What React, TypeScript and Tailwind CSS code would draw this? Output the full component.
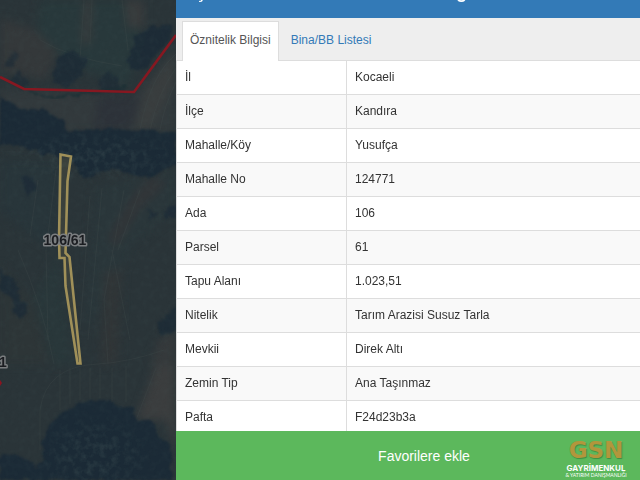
const rows: [string, string][] = [
  ["İl", "Kocaeli"],
  ["İlçe", "Kandıra"],
  ["Mahalle/Köy", "Yusufça"],
  ["Mahalle No", "124771"],
  ["Ada", "106"],
  ["Parsel", "61"],
  ["Tapu Alanı", "1.023,51"],
  ["Nitelik", "Tarım Arazisi Susuz Tarla"],
  ["Mevkii", "Direk Altı"],
  ["Zemin Tip", "Ana Taşınmaz"],
  ["Pafta", "F24d23b3a"],
];

const belt =
  "M0 98L22 110L42 108L62 120L70 132L104 128L176 132V164L148 178L110 170L84 178L70 158L42 154L28 148L0 144Z";
const grove =
  "M42 440L52 420L72 408L92 400L108 400L120 408L134 406L136 422L152 418L158 436L170 444L172 480H0V454L20 456L36 466L44 460Z";

function ParcelMap() {
  return (
    <svg
      className="block h-full w-full"
      viewBox="0 0 176 480"
      preserveAspectRatio="xMidYMid slice"
      role="img"
      aria-label="Parsel haritası"
    >
      <defs>
        <filter id="soft" x="-20%" y="-20%" width="140%" height="140%" colorInterpolationFilters="sRGB">
          <feGaussianBlur stdDeviation="4" />
        </filter>
        <filter id="trees" x="-10%" y="-10%" width="120%" height="120%" colorInterpolationFilters="sRGB">
          <feTurbulence type="fractalNoise" baseFrequency="0.12" numOctaves="3" seed="4" result="n" />
          <feDisplacementMap in="SourceGraphic" in2="n" scale="8" xChannelSelector="R" yChannelSelector="G" />
          <feGaussianBlur stdDeviation="1.2" />
        </filter>
        <filter id="grain" x="0" y="0" width="100%" height="100%" colorInterpolationFilters="sRGB">
          <feTurbulence type="fractalNoise" baseFrequency="0.16" numOctaves="3" seed="9" />
          <feColorMatrix values="0 0 0 0 0.3  0 0 0 0 0.38  0 0 0 0 0.38  1.6 0 0 0 -0.6" />
        </filter>
        <radialGradient id="clearing">
          <stop offset="0.3" stopColor="#fff" />
          <stop offset="1" stopColor="#000" />
        </radialGradient>
        <mask id="canopy">
          <ellipse cx="94" cy="156" rx="100" ry="26" fill="url(#clearing)" />
          <ellipse cx="94" cy="456" rx="62" ry="42" fill="url(#clearing)" />
        </mask>
      </defs>
      <rect width="176" height="480" fill="#2a3438" />
      <g filter="url(#soft)">
        <path d="M40 0H142V40L128 88L60 60L36 36Z" fill="#28383b" />
        <path d="M0 18L36 30L58 52L46 80L0 72Z" fill="#34383a" />
        <path d="M84 0H92L90 44H82ZM124 0H144V28H128Z" fill="#383b3c" />
        <path d="M0 88L134 96L176 48V132H0Z" fill="#32393c" />
        <path d="M98 97H140L130 130H94Z" fill="#2d3239" />
        <path d="M176 50L146 88L134 130H150L176 80Z" fill="#393d3e" />
        <path d="M0 160H60L54 250L24 230L0 210Z" fill="#28353a" />
        <path d="M94 188L150 176L176 170V212L134 244L108 300L84 330Z" fill="#2a363a" />
        <path d="M152 174L166 184L138 212L116 248L108 238L132 196Z" fill="#313538" />
        <path d="M104 272L122 268L118 362L100 366Z" fill="#303537" />
        <path d="M0 264L32 300L50 364H0Z" fill="#2d3537" />
        <path d="M156 364H176V454L166 420L136 420Z" fill="#3b3d3e" />
        <path d="M34 300L58 250L74 364L52 366Z" fill="#29373a" />
        <path d="M158 340L176 330V366H150Z" fill="#35393b" />
      </g>
      <g stroke="#414b4b" strokeWidth="1" fill="none" opacity="0.3">
        <path d="M84 0L80 60M92 0L90 44M122 0L128 50M40 40Q70 58 122 66" />
        <path d="M176 54Q150 76 140 130M176 68Q158 92 150 130M176 82Q164 106 160 130" />
        <path d="M56 170L46 250L48 340M38 180L30 236M90 196L80 330M102 188L88 340" />
        <path d="M124 190L104 300L108 364M140 190L118 250M18 250Q44 310 54 364" />
        <path d="M40 450V410Q46 366 98 364Q130 362 164 350" />
        <path d="M60 370V410M70 368V404M80 368V400M90 368V400M100 368V398M112 368V402M126 366V402" />
        <path d="M156 368L136 420M130 340L112 250" />
      </g>
      <g fill="#1b2a36" filter="url(#trees)">
        <path opacity="0.75" d="M52 74L60 54L74 50L86 58L82 76L70 86L54 84Z" />
        <path opacity="0.85" d="M128 60L136 36L154 26L174 24L170 40L154 56L146 70L132 70Z" />
        <path opacity="0.6" d="M4 66L14 50L18 58L12 68ZM10 80L20 70L30 86L20 88ZM98 82L108 70L120 84L126 92H102Z" />
        <path d={belt} />
        <path opacity="0.7" d="M20 176L32 176L36 188L28 196ZM148 210L158 212L150 222ZM162 212L176 204V218L166 218Z" />
        <path opacity="0.8" d="M0 270L16 282L20 300L28 306L22 320L12 312L14 300L0 288Z" />
        <path opacity="0.8" d="M156 326L176 306V330L162 336Z" />
        <path d={grove} />
      </g>
      <path d="M28 90Q46 100 64 96L92 92L128 86" fill="none" stroke="#1c2f34" strokeWidth="2" filter="url(#trees)" />
      <g mask="url(#canopy)" opacity="0.3">
        <rect width="176" height="480" filter="url(#grain)" />
      </g>
      <rect width="176" height="480" filter="url(#grain)" opacity="0.12" />
      <path d="M0 77L24 89L134 92L176 35" fill="none" stroke="#861821" strokeWidth="2.6" />
      <path d="M0 380L2 383L0 386Z" fill="#8b1420" />
      <path
        d="M60.500 154.500L71 156.500L67.500 181L65.500 253L69.500 257L80.500 363.500H77.500L65.500 286L64.500 258H59.500L59 240Z"
        fill="#8b7b50"
        fillOpacity="0.18"
        stroke="#a09059"
        strokeWidth="2.6"
      />
      <g
        fontFamily="'Liberation Sans', Arial, sans-serif"
        fontWeight="700"
        fontSize="14"
        fill="#1b1d21"
        stroke="#7b7e80"
        strokeWidth="3"
        strokeLinejoin="round"
        paintOrder="stroke"
      >
        <text x="65" y="245" textAnchor="middle">106/61</text>
        <text x="-1" y="367">1</text>
      </g>
    </svg>
  );
}

function Logo() {
  return (
    <div className="pointer-events-none absolute right-3 bottom-0 flex w-16 flex-col items-center pb-0.5 whitespace-nowrap text-white">
      <span className="mb-0.5 font-['DejaVu_Sans',sans-serif] text-[23px] leading-6 font-bold text-[#b2963c] [text-shadow:1px_1px_1px_#3e8c42]">
        GSN
      </span>
      <span className="font-[Inter,sans-serif] text-[8px] leading-[8px] font-bold">GAYRİMENKUL</span>
      <span className="font-[Lato,sans-serif] text-[5px] leading-[6px]">&amp; YATIRIM DANIŞMANLIĞI</span>
    </div>
  );
}

export default function App() {
  return (
    <div className="flex h-screen overflow-hidden bg-[#2a3438] font-['Liberation_Sans',Arial,sans-serif] text-xs text-[#333]">
      <aside className="w-44 shrink-0">
        <ParcelMap />
      </aside>
      <main className="flex min-w-0 flex-1 flex-col bg-white">
        <header className="h-[18px] shrink-0 overflow-hidden bg-[#337ab7] text-white">
          <h1 className="-mt-4 flex w-[296px] justify-between text-lg leading-4 font-bold">
            <span>Taşınmaz</span>
            <span>Bilgi</span>
          </h1>
        </header>
        <nav className="flex h-[43px] shrink-0 items-end border-b border-[#ddd] bg-[#eee] px-1.5" aria-label="Sekmeler">
          <button type="button" className="-mb-px h-10 border border-b-0 border-[#ddd] bg-white px-[7px] pb-1 text-[#555]">
            Öznitelik Bilgisi
          </button>
          <button type="button" className="h-10 px-3 text-[#337ab7]">
            Bina/BB Listesi
          </button>
        </nav>
        <div className="min-h-0 flex-1 overflow-hidden">
          <table className="w-full table-fixed border-separate border-spacing-0">
            <colgroup>
              <col className="w-[171px]" />
              <col />
            </colgroup>
            <tbody>
              {rows.map(([label, value]) => (
                <tr key={label} className="h-[34px] even:bg-[#f9f9f9]">
                  <th scope="row" className="border-x border-b border-[#ddd] px-2 pb-0.5 text-left font-normal">
                    {label}
                  </th>
                  <td className="border-b border-[#ddd] px-2 pb-0.5">{value}</td>
                </tr>
              ))}
            </tbody>
          </table>
        </div>
        <footer className="relative shrink-0">
          <button type="button" className="h-[49px] w-full bg-[#5cb85c] pl-8 text-sm text-white">
            Favorilere ekle
          </button>
          <Logo />
        </footer>
      </main>
    </div>
  );
}
